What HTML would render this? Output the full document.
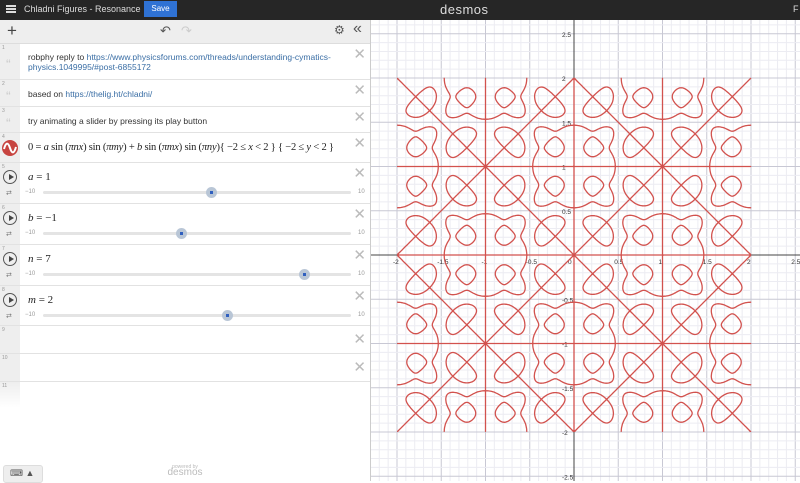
<!DOCTYPE html>
<html><head><meta charset="utf-8"><style>
*{margin:0;padding:0;box-sizing:border-box}
body{width:800px;height:481px;overflow:hidden;font-family:"Liberation Sans",sans-serif;background:#fff;position:relative}
#top{position:absolute;left:0;top:0;width:800px;height:20px;background:#262626;color:#ddd;font-size:9px}
#left{position:absolute;left:0;top:20px;width:371px;height:461px;background:#fff;border-right:1px solid #ccc}
#tb{height:24px;background:#eee;border-bottom:1px solid #ddd;position:relative}
.row{position:absolute;left:0;width:370px;border-bottom:1px solid #e2e2e2;background:#fff}
.gut{position:absolute;left:0;top:0;bottom:0;width:20px;background:#eee}
.num{position:absolute;left:2px;top:1px;font-size:5px;color:#999}
.x{position:absolute;right:4px;top:3px;color:#bbb;font-size:15px;line-height:15px}
.txt{position:absolute;left:28px;font-size:8.5px;color:#333}
a{color:#3a6ea5;text-decoration:none}
.m{font-family:"Liberation Serif",serif;font-size:11px;color:#222;position:absolute;left:28px}
.sl{position:absolute;left:43px;width:308px;height:3px;background:#e4e4e4;border-radius:2px}
.lo{position:absolute;left:25px;font-size:6px;color:#999}
.hi{position:absolute;left:358px;font-size:6px;color:#999}
.kn{position:absolute;width:11px;height:11px;border-radius:50%;background:#b9c6d6}
.kn:after{content:"";position:absolute;left:4px;top:4px;width:3px;height:3px;background:#2f5fbf}
.play{position:absolute;left:3px;top:7px;width:14px;height:14px;border:1.3px solid #555;border-radius:50%}
.play:after{content:"";position:absolute;left:4.5px;top:3px;border-left:5px solid #444;border-top:3px solid transparent;border-bottom:3px solid transparent}
.rep{position:absolute;left:6px;top:26px;font-size:7px;color:#777}
#graph{position:absolute;left:371px;top:20px}
</style></head><body>
<div id="top">
<div style="position:absolute;left:6px;top:5px;width:10px;height:2px;background:#ddd;box-shadow:0 3px 0 #ddd,0 6px 0 #ddd"></div>
<div style="position:absolute;left:24px;top:4px">Chladni Figures - Resonance &#9660;</div>
<div style="position:absolute;left:144px;top:1px;width:33px;height:16px;background:#2f72d4;color:#fff;text-align:center;line-height:16px;font-size:8px">Save</div>
<div style="position:absolute;left:440px;top:2px;font-size:13px;color:#ddd;letter-spacing:0.5px">desmos</div>
<div style="position:absolute;left:793px;top:4px">F</div>
</div>
<svg id="graph" width="429" height="461"></svg>
<div id="left">
<div id="tb">
<div style="position:absolute;left:7px;top:0;font-size:17px;color:#444;line-height:22px">+</div>
<div style="position:absolute;left:160px;top:3px;font-size:13px;color:#555">&#8630;</div>
<div style="position:absolute;left:181px;top:3px;font-size:13px;color:#ccc">&#8631;</div>
<div style="position:absolute;left:334px;top:3px;font-size:12px;color:#555">&#9881;</div>
<div style="position:absolute;left:353px;top:0;font-size:16px;color:#555">&laquo;</div>
</div>
<div class="row" style="top:24px;height:36px"><div class="gut"></div><span class="num">1</span><span style="position:absolute;left:6px;top:12px;color:#ccc;font-size:14px">&ldquo;</span><div class="x">&#10005;</div><div class="txt" style="top:8px;line-height:10px">robphy reply to <a>https://www.physicsforums.com/threads/understanding-cymatics-</a><br><a>physics.1049995/#post-6855172</a></div></div>
<div class="row" style="top:60px;height:27px"><div class="gut"></div><span class="num">2</span><span style="position:absolute;left:6px;top:8px;color:#ccc;font-size:14px">&ldquo;</span><div class="x">&#10005;</div><div class="txt" style="top:9px">based on <a>https://thelig.ht/chladni/</a></div></div>
<div class="row" style="top:87px;height:26px"><div class="gut"></div><span class="num">3</span><span style="position:absolute;left:6px;top:8px;color:#ccc;font-size:14px">&ldquo;</span><div class="x">&#10005;</div><div class="txt" style="top:9px">try animating a slider by pressing its play button</div></div>
<div class="row" style="top:113px;height:30px"><div class="gut"></div><span class="num">4</span>
<svg style="position:absolute;left:2px;top:7px" width="16" height="16"><circle cx="8" cy="8" r="8" fill="#c74440"/><path d="M2 9 C4 2 6 2 8 8 S12 14 14 7" stroke="#fff" stroke-width="2" fill="none"/></svg>
<div class="x">&#10005;</div><div class="m" style="top:9px;font-size:10.5px;white-space:nowrap;letter-spacing:-0.2px">0 = <i>a</i> sin (<i>πnx</i>) sin (<i>πmy</i>) + <i>b</i> sin (<i>πmx</i>) sin (<i>πny</i>){ −2 ≤ <i>x</i> &lt; 2 } { −2 ≤ <i>y</i> &lt; 2 }</div></div>

<div class="row" style="top:143px;height:41px"><div class="gut"></div><span class="num">5</span><div class="play"></div><div class="rep">&#8644;</div><div class="x">&#10005;</div><div class="m" style="top:8px"><i>a</i> = 1</div><span class="lo" style="top:26px">−10</span><div class="sl" style="top:28px"></div><div class="kn" style="left:206px;top:24px"></div><span class="hi" style="top:26px">10</span></div>
<div class="row" style="top:184px;height:41px"><div class="gut"></div><span class="num">6</span><div class="play"></div><div class="rep">&#8644;</div><div class="x">&#10005;</div><div class="m" style="top:8px"><i>b</i> = −1</div><span class="lo" style="top:26px">−10</span><div class="sl" style="top:28px"></div><div class="kn" style="left:176px;top:24px"></div><span class="hi" style="top:26px">10</span></div>
<div class="row" style="top:225px;height:41px"><div class="gut"></div><span class="num">7</span><div class="play"></div><div class="rep">&#8644;</div><div class="x">&#10005;</div><div class="m" style="top:8px"><i>n</i> = 7</div><span class="lo" style="top:26px">−10</span><div class="sl" style="top:28px"></div><div class="kn" style="left:299px;top:24px"></div><span class="hi" style="top:26px">10</span></div>
<div class="row" style="top:266px;height:40px"><div class="gut"></div><span class="num">8</span><div class="play"></div><div class="rep">&#8644;</div><div class="x">&#10005;</div><div class="m" style="top:8px"><i>m</i> = 2</div><span class="lo" style="top:26px">−10</span><div class="sl" style="top:28px"></div><div class="kn" style="left:222px;top:24px"></div><span class="hi" style="top:26px">10</span></div>
<div class="row" style="top:306px;height:28px"><div class="gut"></div><span class="num">9</span><div class="x" style="top:6px">&#10005;</div></div>
<div class="row" style="top:334px;height:28px"><div class="gut"></div><span class="num">10</span><div class="x" style="top:6px">&#10005;</div></div>
<div style="position:absolute;left:0;top:362px;width:20px;height:26px;background:linear-gradient(#eee,#fff)"><span class="num">11</span></div>
<div style="position:absolute;left:3px;top:445px;width:40px;height:18px;background:#eee;border:1px solid #ddd;border-radius:3px;font-size:9px;color:#555;padding:2px 6px">&#9000; &#9650;</div>
<div style="position:absolute;left:160px;top:444px;width:50px;text-align:center;color:#bbb;font-size:5px;line-height:6px">powered by<br><span style="font-size:10px">desmos</span></div>
</div>
<script>
(function(){
var svg=document.getElementById('graph'),W=429,H=461,ox=574-371,oy=255-20,s=88.5,out=[];
function L(x1,y1,x2,y2,c,w){out.push('<line x1="'+x1+'" y1="'+y1+'" x2="'+x2+'" y2="'+y2+'" stroke="'+c+'" stroke-width="'+w+'"/>');}
for(var i=-30;i<=30;i++){var x=ox+i*s/10;if(x>=0&&x<=W)L(x,0,x,H,i%5==0?'#c8c8d4':'#ececf2',1);}
for(var i=-30;i<=30;i++){var y=oy+i*s/10;if(y>=0&&y<=H)L(0,y,W,y,i%5==0?'#c8c8d4':'#ececf2',1);}
L(ox,0,ox,H,'#444',1);L(0,oy,W,oy,'#444',1);
var lab=[-2,-1.5,-1,-0.5,0.5,1,1.5,2,2.5];
lab.forEach(function(v){out.push('<text x="'+(ox+v*s-4)+'" y="'+(oy+9)+'" font-size="6.5" fill="#333" font-family="Liberation Sans">'+v+'</text>');});
lab.concat([-2.5]).forEach(function(v){out.push('<text x="'+(ox-12)+'" y="'+(oy-v*s+3)+'" font-size="6.5" fill="#333" font-family="Liberation Sans">'+v+'</text>');});
out.push('<text x="'+(ox-6)+'" y="'+(oy+9)+'" font-size="6.5" fill="#333" font-family="Liberation Sans">0</text>');
var P=Math.PI;function f(x,y){return Math.sin(7*P*x)*Math.sin(2*P*y)-Math.sin(2*P*x)*Math.sin(7*P*y);}
var N=400,h=3.99/N,e=0.00123,st=-1.995,d='',g=[];
for(var j=0;j<=N;j++){g[j]=[];for(var i=0;i<=N;i++)g[j][i]=f(st+i*h+e,st+j*h+e);}
function X(x){return (ox+x*s).toFixed(1)}function Y(y){return (oy-y*s).toFixed(1)}
for(var j=0;j<N;j++)for(var i=0;i<N;i++){
var x0=st+i*h+e,y0=st+j*h+e,a=g[j][i],b=g[j][i+1],c=g[j+1][i+1],dd=g[j+1][i],pts=[];
if((a>0)!=(b>0))pts.push([x0+h*a/(a-b),y0]);
if((b>0)!=(c>0))pts.push([x0+h,y0+h*b/(b-c)]);
if((dd>0)!=(c>0))pts.push([x0+h*dd/(dd-c),y0+h]);
if((a>0)!=(dd>0))pts.push([x0,y0+h*a/(a-dd)]);
for(var k=0;k+1<pts.length;k+=2)d+='M'+X(pts[k][0])+' '+Y(pts[k][1])+'L'+X(pts[k+1][0])+' '+Y(pts[k+1][1]);}
out.push('<path d="'+d+'" stroke="#d2524e" stroke-width="1.3" fill="none" stroke-linecap="round"/>');
svg.innerHTML=out.join('');
})();
</script>
</body></html>
